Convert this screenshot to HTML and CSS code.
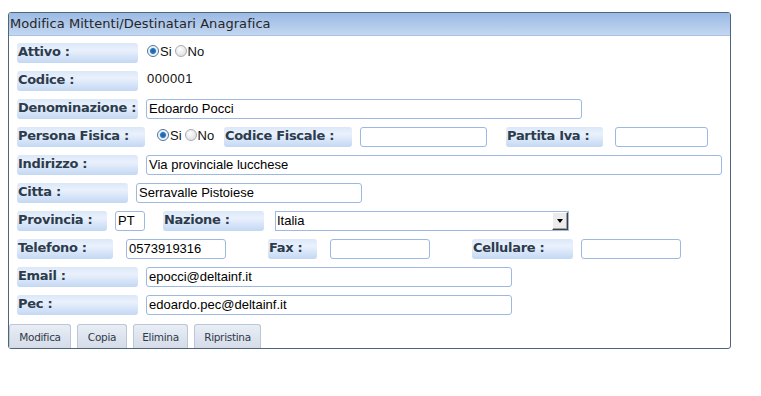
FILE: index.html
```html
<!DOCTYPE html>
<html>
<head>
<meta charset="utf-8">
<link rel="stylesheet" href="styles.css">
</head>
<body>
<div class="panel">
  <div class="header">Modifica Mittenti/Destinatari Anagrafica</div>
  <div class="form">
    <div class="row">
      <span class="lbl w121">Attivo :</span>
      <span class="radios r1">
        <span class="radio on"></span><span class="rt">Si</span>
        <span class="radio"></span><span class="rt">No</span>
      </span>
    </div>
    <div class="row">
      <span class="lbl w121">Codice :</span>
      <span class="val">000001</span>
    </div>
    <div class="row">
      <span class="lbl w121">Denominazione :</span>
      <span class="inp i-den">Edoardo Pocci</span>
    </div>
    <div class="row">
      <span class="lbl w128">Persona Fisica :</span>
      <span class="radios r2">
        <span class="radio on"></span><span class="rt">Si</span>
        <span class="radio"></span><span class="rt">No</span>
      </span>
      <span class="lbl w128">Codice Fiscale :</span>
      <span class="inp i-cf"></span>
      <span class="lbl w97 ml19">Partita Iva :</span>
      <span class="inp i-piva"></span>
    </div>
    <div class="row">
      <span class="lbl w121">Indirizzo :</span>
      <span class="inp i-ind">Via provinciale lucchese</span>
    </div>
    <div class="row">
      <span class="lbl w111">Citta :</span>
      <span class="inp i-cit">Serravalle Pistoiese</span>
    </div>
    <div class="row">
      <span class="lbl w90">Provincia :</span>
      <span class="inp i-prov">PT</span>
      <span class="lbl w101 ml18">Nazione :</span>
      <span class="select">
        <span class="sel-text">Italia</span>
        <span class="sel-btn"><span class="tri"></span></span>
      </span>
    </div>
    <div class="row">
      <span class="lbl w96">Telefono :</span>
      <span class="inp i-tel ml13">0573919316</span>
      <span class="lbl w49 ml42">Fax :</span>
      <span class="inp i-fax ml13">&nbsp;</span>
      <span class="lbl w101 ml42">Cellulare :</span>
      <span class="inp i-cel">&nbsp;</span>
    </div>
    <div class="row">
      <span class="lbl w121">Email :</span>
      <span class="inp i-mail">epocci@deltainf.it</span>
    </div>
    <div class="row">
      <span class="lbl w121">Pec :</span>
      <span class="inp i-mail">edoardo.pec@deltainf.it</span>
    </div>
  </div>
  <div class="buttons">
    <span class="btn b1">Modifica</span>
    <span class="btn b2">Copia</span>
    <span class="btn b3">Elimina</span>
    <span class="btn b4">Ripristina</span>
  </div>
</div>
</body>
</html>
```

FILE: styles.css
```css
html, body {
  margin: 0;
  padding: 0;
  background: #ffffff;
}
body {
  padding: 12px 0 0 8px;
  font-family: "Liberation Sans", Arial, sans-serif;
}
.panel {
  width: 723px;
  height: 337px;
  border: 1px solid #4f6579;
  border-radius: 3px;
  box-sizing: border-box;
  display: flex;
  flex-direction: column;
  background: #fff;
}
.header {
  height: 22px;
  background: linear-gradient(#9bbae5, #c3d7f0);
  border-bottom: 1px solid #a9c2e4;
  border-radius: 2px 2px 0 0;
  font-family: "DejaVu Sans", Verdana, sans-serif;
  font-size: 13px;
  color: #262626;
  line-height: 22px;
  padding-left: 1px;
  letter-spacing: 0.05px;
}
.form {
  padding: 7px 0 0 8px;
  display: flex;
  flex-direction: column;
  gap: 8px;
  flex: 1;
}
.row {
  display: flex;
  align-items: center;
  height: 20px;
}
.lbl {
  height: 20px;
  box-sizing: border-box;
  border-radius: 3px;
  background: linear-gradient(#dbe7f8, #eaf1fc 35%, #c3d8f4);
  font-family: "DejaVu Sans", Verdana, sans-serif;
  font-weight: bold;
  font-size: 13px;
  letter-spacing: -0.3px;
  color: #2c3c4d;
  line-height: 18px;
  padding-left: 1px;
  white-space: nowrap;
}
.w121 { width: 121px; }
.w128 { width: 128px; }
.w111 { width: 111px; }
.w97 { width: 97px; }
.w90 { width: 90px; }
.w101 { width: 101px; }
.w96 { width: 96px; }
.w49 { width: 49px; }
.ml18 { margin-left: 18px; }
.ml19 { margin-left: 19px; }
.ml13 { margin-left: 13px; }
.ml42 { margin-left: 42px; }

.radios {
  display: flex;
  align-items: center;
  font-size: 13px;
  color: #111;
  position: relative;
  top: -2px;
}
.r1 { margin-left: 9px; }
.r2 { margin-left: 12px; width: 67px; }
.radio {
  width: 12px;
  height: 12px;
  box-sizing: border-box;
  border-radius: 50%;
  border: 1px solid #a8acb2;
  background: radial-gradient(circle at 40% 35%, #ffffff, #d5d8dc);
  display: inline-block;
  margin-right: 1px;
}
.radio.on {
  border-color: #4a7399;
  background: radial-gradient(circle, #1b5fa6 0, #2a78c4 2.5px, #dfe9f4 3.5px, #ffffff 5px);
}
.rt { margin-right: 3px; }

.val {
  margin-left: 9px;
  font-size: 13px;
  color: #111;
  line-height: 18px;
  position: relative;
  top: -2px;
  letter-spacing: 0.4px;
}
.inp {
  height: 20px;
  box-sizing: border-box;
  border: 1px solid #9db9e2;
  border-radius: 3px;
  font-size: 13px;
  color: #000;
  line-height: 18px;
  padding-left: 2px;
  background: #fff;
  white-space: nowrap;
  overflow: hidden;
}
.i-den { margin-left: 8px; width: 436px; }
.i-cf { margin-left: 8px; width: 127px; }
.i-piva { margin-left: 12px; width: 93px; }
.i-ind { margin-left: 8px; width: 576px; }
.i-cit { margin-left: 8px; width: 226px; }
.i-prov { margin-left: 8px; width: 30px; }
.i-tel { width: 100px; }
.i-fax { width: 100px; }
.i-cel { margin-left: 8px; width: 100px; }
.i-mail { margin-left: 8px; width: 366px; }

.select {
  margin-left: 11px;
  width: 294px;
  height: 20px;
  box-sizing: border-box;
  border: 1px solid #9db9e2;
  display: flex;
  align-items: stretch;
  background: #fff;
}
.sel-text {
  flex: 1;
  font-size: 13px;
  line-height: 18px;
  padding-left: 1px;
  color: #000;
}
.sel-btn {
  width: 16px;
  background: #ececec;
  border-left: 1px solid #fff;
  border-top: 1px solid #fff;
  border-right: 1px solid #404040;
  border-bottom: 1px solid #404040;
  box-sizing: border-box;
  box-shadow: inset -1px -1px 0 #a0a0a0;
  display: flex;
  align-items: center;
  justify-content: center;
}
.tri {
  width: 0;
  height: 0;
  border-left: 3.5px solid transparent;
  border-right: 3.5px solid transparent;
  border-top: 4px solid #000;
}

.buttons {
  display: flex;
  gap: 6px;
  height: 24px;
  align-items: flex-end;
}
.btn {
  height: 24px;
  box-sizing: border-box;
  border: 1px solid #bcc6d4;
  border-bottom: none;
  border-radius: 3px 3px 0 0;
  background: linear-gradient(#e8edf5, #d5dce8);
  font-family: "DejaVu Sans", Tahoma, sans-serif;
  font-size: 10.5px;
  letter-spacing: -0.3px;
  color: #2f3a48;
  display: flex;
  align-items: center;
  justify-content: center;
}
.b1 { width: 62px; }
.b2 { width: 50px; }
.b3 { width: 55px; }
.b4 { width: 67px; }
```
